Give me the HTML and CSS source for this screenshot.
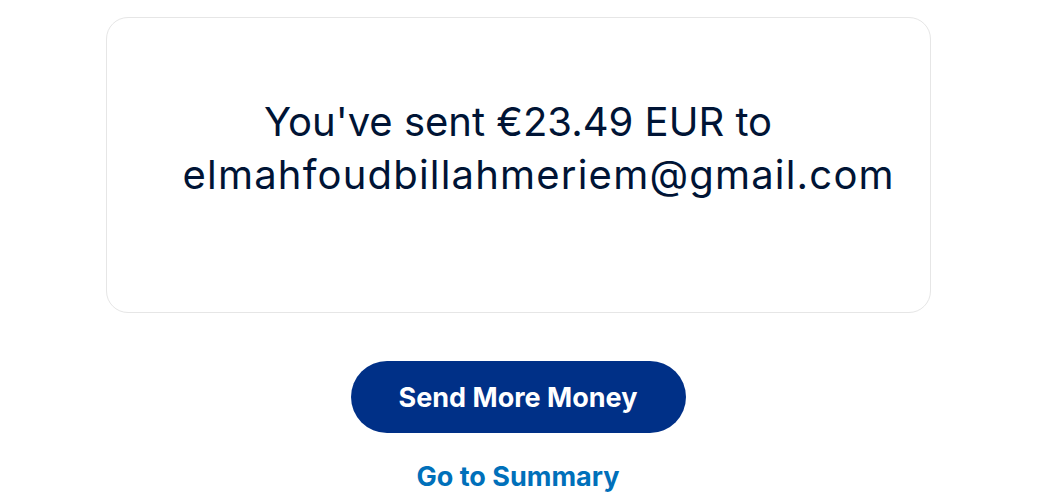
FILE: index.html
```html
<!DOCTYPE html>
<html lang="en">
<head>
<meta charset="utf-8">
<title>Sent</title>
<link rel="stylesheet" href="styles.css">
</head>
<body>
<main class="page">
  <section class="card">
    <h1 class="message">You've sent €23.49 EUR to <span class="email">elmahfoudbillahmeriem@gmail.com</span></h1>
  </section>
  <div class="actions">
    <button class="btn-primary" type="button">Send More Money</button>
    <a class="link" href="#">Go to Summary</a>
  </div>
</main>
</body>
</html>
```

FILE: styles.css
```css
* { box-sizing: border-box; }
html, body { margin: 0; padding: 0; background: #fff; }
body { font-family: Inter, "Liberation Sans", sans-serif; color: #001435; }
.page {
  width: 1036px;
  padding-top: 17px;
  display: flex;
  flex-direction: column;
  align-items: center;
}
.card {
  width: 825px;
  height: 296px;
  border: 1px solid #e6e6e6;
  border-radius: 22px;
  padding: 77px 76px 0;
}
.message {
  margin: 0;
  text-align: center;
  font-size: 40px;
  font-weight: 400;
  line-height: 53px;
  color: #001435;
}
.email {
  letter-spacing: 1.2px;
}
.actions {
  margin-top: 48px;
  display: flex;
  flex-direction: column;
  align-items: center;
}
.btn-primary {
  width: 335px;
  height: 72px;
  border: none;
  border-radius: 36px;
  background: #003087;
  color: #fff;
  font-family: Inter, "Liberation Sans", sans-serif;
  font-size: 27px;
  font-weight: 700;
  cursor: pointer;
}
.link {
  margin-top: 27px;
  color: #0070ba;
  font-size: 27px;
  font-weight: 700;
  text-decoration: none;
}
```
